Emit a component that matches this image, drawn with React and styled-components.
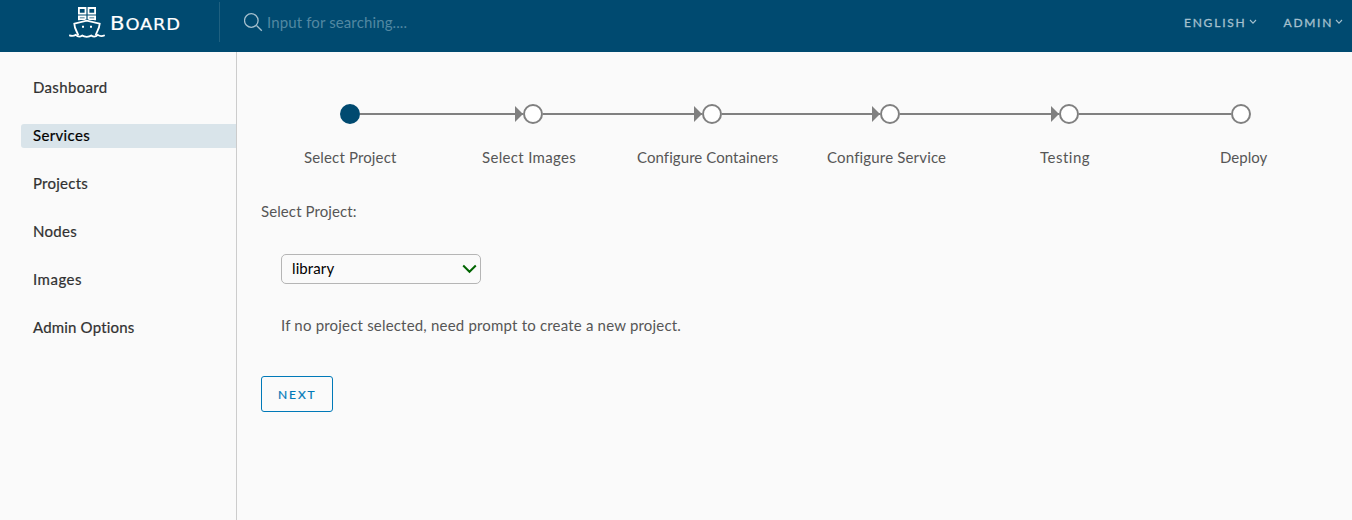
import React from 'react';
import styled, { createGlobalStyle } from 'styled-components';

const GlobalStyle = createGlobalStyle`
  * { box-sizing: border-box; }
  body { margin: 0; background: #fafafa; }
`;

const Page = styled.div`
  height: 520px;
  display: flex;
  flex-direction: column;
  overflow: hidden;
  background: #fafafa;
  color: #565656;
  font-family: Lato, "Noto Sans", sans-serif;
  font-size: 15px;
  line-height: 24px;
`;

const Text = styled.span`
  white-space: nowrap;
  letter-spacing: ${(p) => p.$track || 0}px;
`;

const Header = styled.header`
  height: 52px;
  flex: none;
  display: flex;
  background: #004a70;
`;

const Brand = styled.div`
  width: 219px;
  display: flex;
  padding: 5px 0 0 68px;
`;

const BrandName = styled.span`
  margin: 6px 0 0 4px;
  font-family: "DejaVu Sans", sans-serif;
  font-size: 16px;
  line-height: 24px;
  letter-spacing: 0.7px;
  -webkit-text-stroke: 0.2px #fff;
  color: #fff;
  transform: scaleX(1.12);
  transform-origin: left center;
`;

const Initial = styled.span`
  font-size: 19px;
`;

const Search = styled.div`
  height: 40px;
  margin-top: 2px;
  padding: 8px 0 0 24px;
  flex: 1;
  display: flex;
  border-left: 1px solid #1f6080;
  color: #5288a2;
  svg { margin: 2px 4px 0 0; }
`;

const HeaderMenu = styled.nav`
  display: flex;
  padding: 11px 9px 0 0;
  gap: 27px;
`;

const MenuButton = styled.button`
  display: flex;
  height: 24px;
  padding: 0;
  border: 0;
  background: none;
  color: #a5c0ce;
  font: 400 12px/24px Lato, sans-serif;
  -webkit-text-stroke: 0.3px currentColor;
  svg { margin: 8px 0 0 2px; }
`;

const Body = styled.div`
  flex: 1;
  display: flex;
`;

const Sidebar = styled.nav`
  width: 237px;
  padding: 24px 0 0 21px;
  display: flex;
  flex-direction: column;
  gap: 24px;
  border-right: 1px solid #ccc;
`;

const NavItem = styled.a`
  height: 24px;
  padding-left: 12px;
  border-radius: 3px 0 0 3px;
  line-height: 22px;
  -webkit-text-stroke: 0.2px currentColor;
  color: ${(p) => (p.$active ? '#000' : '#313131')};
  background: ${(p) => (p.$active ? '#d9e4ea' : 'transparent')};
`;

const Main = styled.main`
  flex: 1;
  padding-top: 52px;
`;

const Track = styled.div`
  display: flex;
  align-items: center;
  height: 20px;
  padding-left: 103px;
`;

const Dot = styled.span`
  width: 20px;
  height: 20px;
  flex: none;
  border-radius: 50%;
  border: 2px solid ${(p) => (p.$active ? '#004a70' : '#808080')};
  background: ${(p) => (p.$active ? '#004a70' : '#fff')};
`;

const Connector = styled.span`
  display: flex;
  align-items: center;
  justify-content: flex-end;
  width: ${(p) => p.$width}px;
  height: 16px;
  background: linear-gradient(#808080, #808080) center / 100% 2px no-repeat;
`;

const Arrow = styled.span`
  border: 8px solid transparent;
  border-left-color: #808080;
  border-right-width: 0;
`;

const StepLabels = styled.div`
  display: grid;
  grid-template-columns: 178px 155px 190px 213px 180px 60px;
  margin: 21px 0 0 67px;
`;

const Form = styled.section`
  display: flex;
  flex-direction: column;
  align-items: flex-start;
  padding: 30px 0 0 24px;
`;

const Select = styled.button`
  display: flex;
  justify-content: space-between;
  width: 200px;
  height: 30px;
  margin: 31px 0 0 20px;
  padding: 1px 3px 0 10px;
  border: 1px solid #b5b5b5;
  border-radius: 5px;
  background: #fafafa;
  color: #000;
  font: 15px/24px Lato, sans-serif;
  svg { margin-top: 8px; }
`;

const Hint = styled.p`
  margin: 29px 0 0 20px;
`;

const NextButton = styled.button`
  width: 72px;
  height: 36px;
  margin-top: 39px;
  padding: 1px 0 0 16px;
  text-align: left;
  border: 1px solid #0079b8;
  border-radius: 3px;
  background: transparent;
  color: #0079b8;
  font: 12px/24px Lato, sans-serif;
  -webkit-text-stroke: 0.2px currentColor;
`;

const Ship = () => (
  <svg width="38" height="34" viewBox="0 0 38 34" fill="none" stroke="#fff" strokeWidth="1.8">
    <path d="M10.9 3h6.6v5.6h-6.6zM20.5 3h6.6v5.6h-6.6z" />
    <path d="M10.9 15.2v-3.7h6.6v2.7M20.5 14.2v-2.7h6.6v3.7M10 14.2h7.5M20.5 14.2h7.5" />
    <path d="M10.3 30.2C8.8 26 6.5 24 6.3 18.6L18.8 15.6 31.7 18.6C31.3 24 29 26 27.7 30.2" />
    <path d="M1.2 30.2c2 .8 3.3 1.5 6.6-.3 1.8 1.9 4.2 2.2 6.5.6 2.1 1.7 6.7 1.7 9 0 2.2 1.6 4.7 1.2 6.5-.6 2.4 1.8 5 1.2 7 .3" />
    <path d="M14 21.7h2M22 21.7h2" strokeWidth="2" />
  </svg>
);

const SearchIcon = () => (
  <svg width="19" height="20" viewBox="0 0 19 20" fill="none" stroke="#a5c0ce" strokeWidth="1.3">
    <circle cx="7.3" cy="8.5" r="6.8" />
    <path d="m12.5 13.5 5.3 5.3" />
  </svg>
);

const Caret = () => (
  <svg width="8" height="6" viewBox="0 0 8 6" fill="none" stroke="#a5c0ce" strokeWidth="1.1">
    <path d="m1 1 3 3.2L7 1" />
  </svg>
);

const Check = () => (
  <svg width="15" height="10" viewBox="0 0 15 10" fill="none" stroke="#006400" strokeWidth="2">
    <path d="m1.2 1.5 6.3 6.3 6.3-6.3" />
  </svg>
);

const navItems = [
  ['Dashboard', 0.35],
  ['Services', 0.35],
  ['Projects', 0.25],
  ['Nodes', 0.3],
  ['Images', 0.5],
  ['Admin Options', 0.18],
];

const steps = [
  { label: 'Select Project', track: 0.15, line: 163 },
  { label: 'Select Images', track: 0.33, line: 159 },
  { label: 'Configure Containers', track: 0.07, line: 158 },
  { label: 'Configure Service', track: 0.17, line: 159 },
  { label: 'Testing', track: 0.5, line: 152 },
  { label: 'Deploy', track: 0 },
];

export default function App() {
  return (
    <Page>
      <GlobalStyle />
      <Header>
        <Brand>
          <Ship />
          <BrandName><Initial>B</Initial>OARD</BrandName>
        </Brand>
        <Search>
          <SearchIcon />
          <Text $track={0.12}>Input for searching....</Text>
        </Search>
        <HeaderMenu>
          <MenuButton><Text $track={1.8}>ENGLISH</Text><Caret /></MenuButton>
          <MenuButton><Text $track={1.7}>ADMIN</Text><Caret /></MenuButton>
        </HeaderMenu>
      </Header>
      <Body>
        <Sidebar>
          {navItems.map(([label, track]) => (
            <NavItem key={label} $active={label === 'Services'}>
              <Text $track={track}>{label}</Text>
            </NavItem>
          ))}
        </Sidebar>
        <Main>
          <Track>
            {steps.map((s, i) => (
              <React.Fragment key={s.label}>
                <Dot $active={i === 0} />
                {s.line && <Connector $width={s.line}>{i < 4 && <Arrow />}</Connector>}
              </React.Fragment>
            ))}
          </Track>
          <StepLabels>
            {steps.map((s) => <Text key={s.label} $track={s.track}>{s.label}</Text>)}
          </StepLabels>
          <Form>
            <Text $track={0.1}>Select Project:</Text>
            <Select><Text $track={0.1}>library</Text><Check /></Select>
            <Hint><Text $track={0.19}>If no project selected, need prompt to create a new project.</Text></Hint>
            <NextButton><Text $track={1.9}>NEXT</Text></NextButton>
          </Form>
        </Main>
      </Body>
    </Page>
  );
}
